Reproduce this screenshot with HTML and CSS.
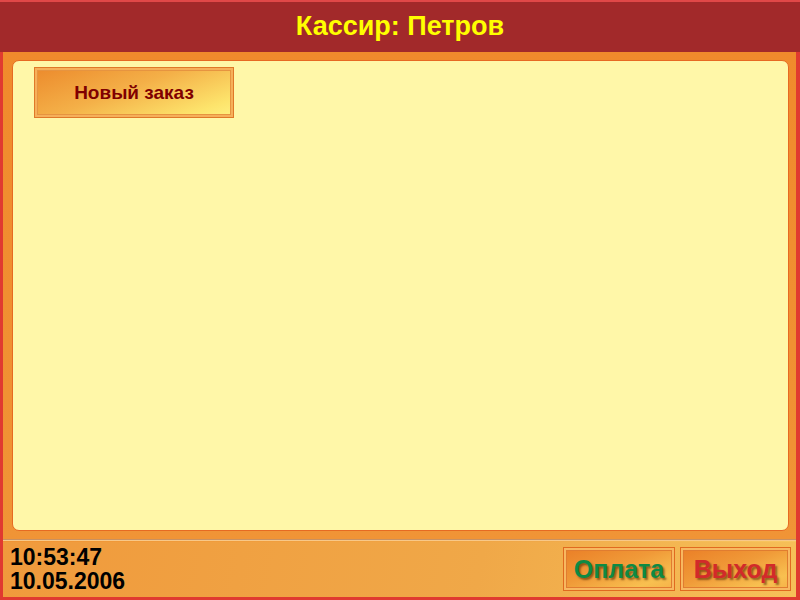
FILE: index.html
```html
<!DOCTYPE html>
<html lang="ru">
<head>
<meta charset="utf-8">
<link rel="stylesheet" href="styles.css">
</head>
<body>
<div class="frame">
  <header class="header">Кассир: Петров</header>
  <div class="main">
    <div class="panel">
      <button class="btn-order">Новый заказ</button>
    </div>
  </div>
  <div class="divider"></div>
  <footer class="footer">
    <div class="clock">
      <div>10:53:47</div>
      <div>10.05.2006</div>
    </div>
    <div class="actions">
      <button class="btn-big pay">Оплата</button>
      <button class="btn-big exit">Выход</button>
    </div>
  </footer>
</div>
</body>
</html>
```
FILE: styles.css
```css
html, body {
  margin: 0;
  padding: 0;
  width: 800px;
  height: 600px;
  overflow: hidden;
  font-family: "Liberation Sans", Arial, sans-serif;
}
.frame {
  box-sizing: border-box;
  width: 800px;
  height: 600px;
  border-left: 3px solid #e03a30;
  border-right: 4px solid #e03a30;
  border-bottom: 3px solid #e03a30;
  display: flex;
  flex-direction: column;
  background: linear-gradient(100deg, #f09030 0%, #f0a848 70%, #f8c860 100%);
}
.header {
  height: 52px;
  box-sizing: border-box;
  border-top: 2px solid #e04848;
  background: #a2292a;
  color: #ffff00;
  font-weight: bold;
  font-size: 27px;
  display: flex;
  align-items: center;
  justify-content: center;
  margin: 0 -4px 0 -3px;
  padding-bottom: 1px;
}
.main {
  flex: 1;
  padding: 8px 7px 8px 9px;
  display: flex;
  background: linear-gradient(180deg, #f08a2c 0%, #f09436 100%);
}
.panel {
  flex: 1;
  box-sizing: border-box;
  background: #fff7a8;
  border: 1px solid #e66a22;
  border-radius: 7px;
  padding: 6px 0 0 21px;
}
.btn-order {
  display: block;
  width: 200px;
  height: 51px;
  box-sizing: border-box;
  border: 1px solid #e07828;
  outline: none;
  background: linear-gradient(160deg, #ec8a2c 0%, #f4b048 45%, #fde46c 85%, #fff080 100%);
  box-shadow: inset 0 0 0 2px #f6b05a, inset 0 0 0 3px #e69440;
  color: #800000;
  font-family: "Liberation Sans", Arial, sans-serif;
  font-weight: bold;
  font-size: 19px;
  padding: 0;
}
.divider {
  height: 3px;
  background: linear-gradient(180deg, #c89060 0 1px, #f8c888 1px 2px, transparent 2px);
}
.footer {
  height: 55px;
  display: flex;
  justify-content: space-between;
  align-items: flex-start;
  padding: 0 0 0 7px;
  background: linear-gradient(100deg, #f09a3c 0%, #f0a848 60%, #f6c058 100%);
}
.clock {
  font-weight: bold;
  font-size: 23px;
  color: #000;
  line-height: 24px;
  padding-top: 3px;
}
.actions {
  display: flex;
  gap: 5px;
  padding-top: 5px;
  padding-right: 5px;
}
.btn-big {
  width: 112px;
  height: 44px;
  box-sizing: border-box;
  border: 1px solid #e06a20;
  background: linear-gradient(160deg, #ea7e26 0%, #f09a38 45%, #f8c050 80%, #f6b048 100%);
  box-shadow: inset 0 0 0 2px #f8b860, inset 0 0 0 3px #e07c30;
  font-family: "Liberation Sans", Arial, sans-serif;
  font-weight: bold;
  font-size: 25px;
  padding: 0;
  text-shadow: 2px 2px 2px rgba(80, 40, 0, 0.6);
}
.pay { color: #0e8a44; }
.exit { color: #d22a2a; width: 111px; }
```
